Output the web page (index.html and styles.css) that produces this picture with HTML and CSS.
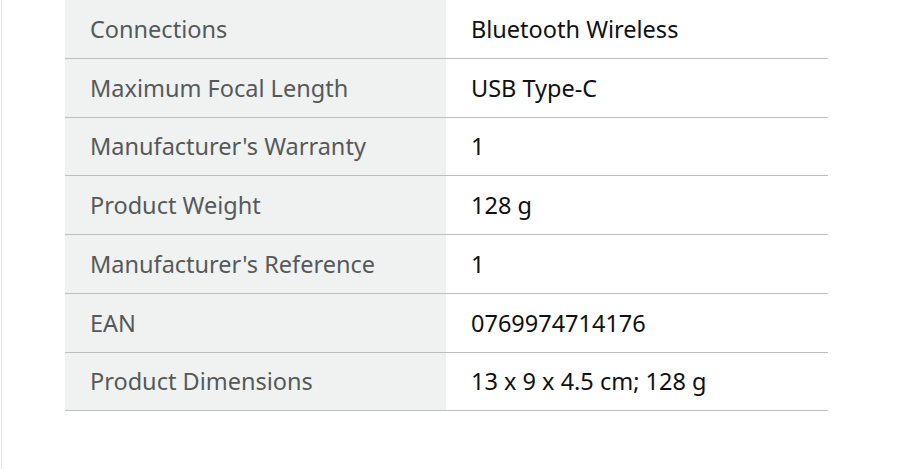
FILE: index.html
```html
<!DOCTYPE html>
<html lang="en">
<head>
<meta charset="utf-8">
<link rel="stylesheet" href="styles.css">
</head>
<body>
<div class="page">
  <table class="specs">
    <tbody>
      <tr><th>Connections</th><td>Bluetooth Wireless</td></tr>
      <tr><th>Maximum Focal Length</th><td>USB Type-C</td></tr>
      <tr><th>Manufacturer's Warranty</th><td>1</td></tr>
      <tr><th>Product Weight</th><td>128 g</td></tr>
      <tr><th>Manufacturer's Reference</th><td>1</td></tr>
      <tr><th>EAN</th><td>0769974714176</td></tr>
      <tr><th>Product Dimensions</th><td>13 x 9 x 4.5 cm; 128 g</td></tr>
    </tbody>
  </table>
</div>
</body>
</html>
```
FILE: styles.css
```css
html, body {
  margin: 0;
  padding: 0;
  background: #ffffff;
}
body {
  height: 469px;
  overflow: hidden;
  font-family: "Noto Sans", "Open Sans", sans-serif;
}
.page {
  margin-left: 1px;
  height: 469px;
  border-left: 1px solid #e7e7e7;
  padding-left: 63px;
}
.specs {
  border-collapse: collapse;
  width: 763px;
  margin-top: -0.5px;
  table-layout: fixed;
}
.specs th,
.specs td {
  height: 58.75px;
  padding: 0 0 0 25px;
  border-bottom: 1px solid #bbbfbf;
  font-size: 23.5px;
  text-align: left;
  vertical-align: middle;
  box-sizing: border-box;
}
.specs th {
  width: 381px;
  background: #f0f2f2;
  color: #565959;
  font-weight: normal;
}
.specs td {
  color: #0f1111;
  padding-left: 25px;
}
```
